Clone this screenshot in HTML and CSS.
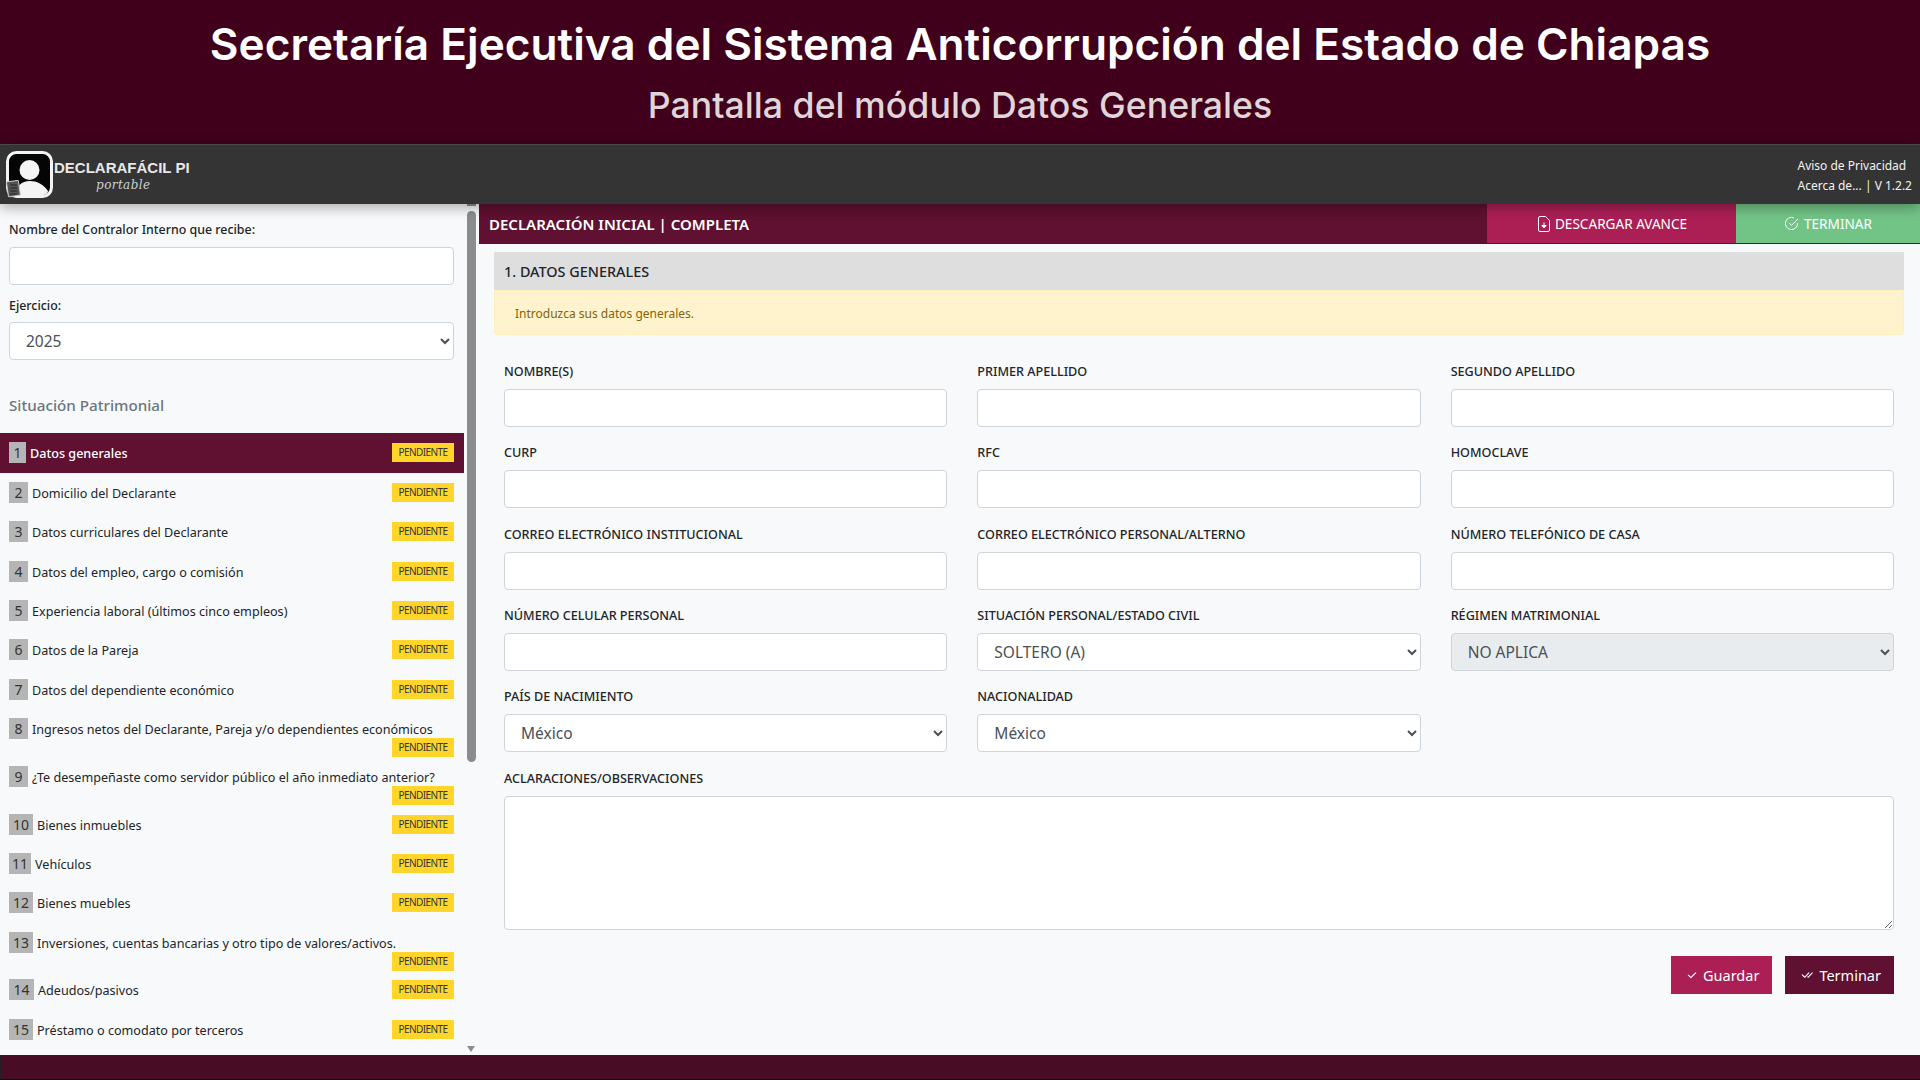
FILE: index.html
```html
<!DOCTYPE html>
<html>

<head>
  <meta name="viewport" content="width=device-width, initial-scale=1">
  <link rel="stylesheet" href="styles.css">
</head>

<body>

  <header class="banner">
    <h1>Secretaría Ejecutiva del Sistema Anticorrupción del Estado de Chiapas</h1>
    <h2>Pantalla del módulo Datos Generales</h2>
  </header>

  <nav class="navbar">
    <div class="brand">
      <svg class="brand-logo" viewBox="0 0 48 48" width="48" height="48">
        <rect x="1.500" y="1.500" width="44" height="44" rx="9" fill="#050505" stroke="#f4f4f4" stroke-width="3"/>
        <circle cx="23.500" cy="19" r="10" fill="#f4f4f4"/>
        <path d="M9 44c1-9 7-14 14.500-14S37 33 42 40c0 2-2 4-5 4z" fill="#f4f4f4"/>
        <rect x="1.500" y="30" width="12" height="15" rx="1" fill="#555" stroke="#ccc" stroke-width="1" transform="rotate(-8 8 38)"/>
        <path d="M4.500 34h6.500M4.500 37h6.500M4.500 40h6.500M4.500 43h6.500" stroke="#222" stroke-width="1"/>
      </svg>
      <div class="brand-text">
        <span class="brand-name">DECLARAFÁCIL PI</span>
        <span class="brand-sub">portable</span>
      </div>
    </div>
    <div class="nav-links">
      <span>Aviso de Privacidad</span>
      <span>Acerca de... | V 1.2.2</span>
    </div>
  </nav>

  <div class="workspace">
    <aside class="sidebar">
      <div class="side-content">
        <div class="side-form">
          <label class="side-label">Nombre del Contralor Interno que recibe:</label>
          <input class="field" type="text">
          <label class="side-label side-label-second">Ejercicio:</label>
          <select class="field">
            <option>2025</option>
          </select>
        </div>
        <h3 class="side-title">Situación Patrimonial</h3>
        <ul class="steps">
          <li class="step active"><span class="num w17">1</span><span class="step-text">Datos generales</span><span class="badge">PENDIENTE</span></li>
          <li class="step"><span class="num">2</span><span class="step-text">Domicilio del Declarante</span><span class="badge">PENDIENTE</span></li>
          <li class="step"><span class="num">3</span><span class="step-text">Datos curriculares del Declarante</span><span class="badge">PENDIENTE</span></li>
          <li class="step"><span class="num">4</span><span class="step-text">Datos del empleo, cargo o comisión</span><span class="badge">PENDIENTE</span></li>
          <li class="step"><span class="num">5</span><span class="step-text">Experiencia laboral (últimos cinco empleos)</span><span class="badge">PENDIENTE</span></li>
          <li class="step"><span class="num">6</span><span class="step-text">Datos de la Pareja</span><span class="badge">PENDIENTE</span></li>
          <li class="step"><span class="num">7</span><span class="step-text">Datos del dependiente económico</span><span class="badge">PENDIENTE</span></li>
          <li class="step wrap"><span class="num">8</span><span class="step-text">Ingresos netos del Declarante, Pareja y/o dependientes económicos</span><span class="badge">PENDIENTE</span></li>
          <li class="step wrap"><span class="num">9</span><span class="step-text">¿Te desempeñaste como servidor público el año inmediato anterior?</span><span class="badge">PENDIENTE</span></li>
          <li class="step"><span class="num w24">10</span><span class="step-text">Bienes inmuebles</span><span class="badge">PENDIENTE</span></li>
          <li class="step"><span class="num w22">11</span><span class="step-text">Vehículos</span><span class="badge">PENDIENTE</span></li>
          <li class="step"><span class="num w24">12</span><span class="step-text">Bienes muebles</span><span class="badge">PENDIENTE</span></li>
          <li class="step wrap"><span class="num w24">13</span><span class="step-text">Inversiones, cuentas bancarias y otro tipo de valores/activos.</span><span class="badge">PENDIENTE</span></li>
          <li class="step"><span class="num w25">14</span><span class="step-text">Adeudos/pasivos</span><span class="badge">PENDIENTE</span></li>
          <li class="step"><span class="num w24">15</span><span class="step-text">Préstamo o comodato por terceros</span><span class="badge">PENDIENTE</span></li>
        </ul>
      </div>
      <div class="scroll">
        <div class="scroll-top"></div>
        <div class="scroll-thumb"></div>
        <div class="scroll-arrow"></div>
      </div>
    </aside>

    <main class="content">
      <div class="titlebar">
        <span class="titlebar-text">DECLARACIÓN INICIAL | COMPLETA</span>
        <button class="top-btn btn-download">
          <svg viewBox="0 0 12 16" width="12" height="16" fill="none" stroke="currentColor" stroke-width="1">
            <path d="M2 .5h5.500L11.500 4.500V14a1.500 1.500 0 0 1-1.500 1.500H2A1.500 1.500 0 0 1 .5 14V2A1.500 1.500 0 0 1 2 .5z"/>
            <path d="M6 6.500v3M3.800 9.500h4.400L6 12z" fill="currentColor"/>
          </svg>
          DESCARGAR AVANCE
        </button>
        <button class="top-btn btn-finish">
          <svg viewBox="0 0 16 16" width="15" height="15" fill="none" stroke="currentColor" stroke-width="1">
            <path d="M14.500 7.500V8A6.500 6.500 0 1 1 10.600 2"/>
            <path d="M5.500 7.500L8 10l7-7"/>
          </svg>
          TERMINAR
        </button>
      </div>

      <div class="panel">
        <div class="panel-head">1. DATOS GENERALES</div>
        <div class="alert">Introduzca sus datos generales.</div>

        <form class="form-grid">
          <div class="group"><label>NOMBRE(S)</label><input class="field" type="text"></div>
          <div class="group"><label>PRIMER APELLIDO</label><input class="field" type="text"></div>
          <div class="group"><label>SEGUNDO APELLIDO</label><input class="field" type="text"></div>
          <div class="group"><label>CURP</label><input class="field" type="text"></div>
          <div class="group"><label>RFC</label><input class="field" type="text"></div>
          <div class="group"><label>HOMOCLAVE</label><input class="field" type="text"></div>
          <div class="group"><label>CORREO ELECTRÓNICO INSTITUCIONAL</label><input class="field" type="text"></div>
          <div class="group"><label>CORREO ELECTRÓNICO PERSONAL/ALTERNO</label><input class="field" type="text"></div>
          <div class="group"><label>NÚMERO TELEFÓNICO DE CASA</label><input class="field" type="text"></div>
          <div class="group"><label>NÚMERO CELULAR PERSONAL</label><input class="field" type="text"></div>
          <div class="group"><label>SITUACIÓN PERSONAL/ESTADO CIVIL</label><select class="field"><option>SOLTERO (A)</option></select></div>
          <div class="group"><label>RÉGIMEN MATRIMONIAL</label><select class="field" disabled><option>NO APLICA</option></select></div>
          <div class="group"><label>PAÍS DE NACIMIENTO</label><select class="field"><option>México</option></select></div>
          <div class="group group-end"><label>NACIONALIDAD</label><select class="field"><option>México</option></select></div>
          <div class="group group-full"><label>ACLARACIONES/OBSERVACIONES</label><textarea class="field notes"></textarea></div>
        </form>

        <div class="actions">
          <button class="btn btn-save">
            <svg viewBox="0 0 16 16" width="12" height="12" fill="currentColor"><path d="M13.500 4.500a.8.8 0 0 1 0 1.100l-6.500 6.500a.8.8 0 0 1-1.100 0L2.500 8.700a.8.8 0 0 1 1.100-1.100L6.400 10.400l6-5.900a.8.8 0 0 1 1.100 0z"/></svg>
            Guardar
          </button>
          <button class="btn btn-end">
            <svg viewBox="0 0 16 16" width="14" height="12" fill="currentColor"><path d="M11 4.500a.7.7 0 0 1 0 1L5.500 11.500a.7.7 0 0 1-1 0L1.200 8.200a.7.7 0 0 1 1-1L5 10l5-5.500a.7.7 0 0 1 1 0z"/><path d="M15.500 4.500a.7.7 0 0 1 0 1L10 11.500a.7.7 0 0 1-1 0l-.8-.8 1-1 .3.300 5-5.500a.7.7 0 0 1 1 0z"/></svg>
            Terminar
          </button>
        </div>
      </div>
    </main>
  </div>

  <footer class="footer"></footer>

</body>

</html>
```

FILE: styles.css
```css
* {
  box-sizing: border-box;
}

html,
body {
  height: 100%;
}

body {
  margin: 0;
  height: 1080px;
  overflow: hidden;
  display: flex;
  flex-direction: column;
  background: #f8f9fa;
  font-family: "Noto Sans", "Open Sans", sans-serif;
  font-size: 12.6px;
  color: #212529;
}

/* Top banner */
.banner {
  height: 144px;
  flex: none;
  background: #40001c;
  color: #fff;
  text-align: center;
  font-family: Inter, "Open Sans", sans-serif;
}

.banner h1 {
  margin: 0;
  padding-top: 18px;
  font-size: 44.2px;
  line-height: 52px;
  font-weight: 600;
}

.banner h2 {
  margin: 0;
  padding-top: 12px;
  font-size: 35.7px;
  line-height: 46px;
  font-weight: 500;
  color: #e0d5d9;
}

/* Navbar */
.navbar {
  height: 60px;
  flex: none;
  display: flex;
  justify-content: space-between;
  align-items: center;
  background: #343434;
  border-top: 1px solid #4a4a4a;
  box-shadow: 0 4px 12px rgba(0, 0, 0, .3);
  position: relative;
  z-index: 2;
  padding: 0 8px 0 6px;
  color: #f2f2f2;
}

.brand {
  display: flex;
  align-items: center;
}

.brand-text {
  display: flex;
  flex-direction: column;
  align-items: center;
  padding-top: 2px;
}

.brand-name {
  font-family: "Liberation Sans", Arial, sans-serif;
  font-weight: 700;
  font-size: 15px;
  line-height: 18px;
  color: #e8e8e8;
}

.brand-sub {
  font-family: "DejaVu Serif", serif;
  font-style: italic;
  font-size: 12px;
  line-height: 16px;
  letter-spacing: .4px;
  margin-left: 3px;
  color: #d0d0d0;
}

.nav-links {
  display: flex;
  flex-direction: column;
  padding-top: 2px;
  font-size: 12px;
  line-height: 20px;
}

/* Main area */
.workspace {
  flex: 1;
  display: flex;
  min-height: 0;
}

.sidebar {
  width: 479px;
  flex: none;
  display: flex;
  overflow: hidden;
}

.side-content {
  width: 464px;
  flex: none;
}

.side-form {
  padding: 16px 10px 0 9px;
}

.side-label {
  display: block;
  font-size: 12.4px;
  font-weight: 500;
  line-height: 19px;
  margin-bottom: 8px;
}

.side-label-second {
  margin-top: 11px;
  margin-bottom: 7px;
}

.field {
  display: block;
  width: 100%;
  height: 38px;
  padding: 6px 16px;
  background: #fff;
  border: 1px solid #ced4da;
  border-radius: 4px;
  font-family: inherit;
  font-size: 15.5px;
  color: #495057;
  outline: none;
}

select.field {
  padding-left: 12px;
}

select.field:disabled {
  background: #e9ecef;
  opacity: 1;
}

.side-title {
  margin: 34px 0 0 9px;
  font-size: 15.2px;
  line-height: 22px;
  font-weight: 500;
  color: #6c757d;
}

.steps {
  list-style: none;
  margin: 17px 0 0;
  padding: 0;
}

.step {
  display: flex;
  flex-wrap: wrap;
  align-items: flex-start;
  height: 39.33px;
  padding: 9px 10px 0 9px;
}

.step.active {
  height: 40px;
  background: #601030;
  color: #fff;
  font-weight: 500;
}

.step.wrap {
  height: 47.8px;
}

.num {
  width: 19px;
  height: 21px;
  background: #b5b5b5;
  text-align: center;
  font-size: 14px;
  line-height: 22px;
  font-weight: 400;
  color: #333;
  margin-right: 4px;
}

.w17 {
  width: 17px;
}

.w22 {
  width: 22px;
}

.w24 {
  width: 24px;
}

.w25 {
  width: 25px;
}

.step-text {
  height: 21px;
  line-height: 24px;
}

.step.wrap .num {
  margin-bottom: -1px;
}

.step.wrap .step-text {
  width: calc(100% - 30px);
  height: 20px;
  white-space: nowrap;
}

.badge {
  width: 62px;
  height: 19px;
  margin: 1px 0 0 auto;
  background: #ffd52c;
  color: #343434;
  text-align: center;
  font-size: 10px;
  letter-spacing: -.6px;
  line-height: 19px;
  font-weight: 400;
}

.step.wrap .badge {
  margin-top: 0;
}

/* Drawn scrollbar */
.scroll {
  flex: 1;
  display: flex;
  flex-direction: column;
  padding: 0 3px 3px;
}

.scroll-top {
  height: 2px;
  margin-bottom: 5px;
  background: #8c8c8c;
}

.scroll-thumb {
  height: 551px;
  background: #8c8c8c;
  border-radius: 5px;
}

.scroll-arrow {
  margin-top: auto;
  width: 0;
  height: 0;
  border-left: 4.5px solid transparent;
  border-right: 4.5px solid transparent;
  border-top: 6px solid #8c8c8c;
}

.content {
  flex: 1;
  min-width: 0;
}

.titlebar {
  display: flex;
  height: 40px;
  background: #601030;
  color: #fff;
}

.titlebar-text {
  flex: 1;
  padding-left: 10px;
  line-height: 40px;
  font-size: 15px;
  font-weight: 600;
}

.top-btn {
  height: 39px;
  border: 0;
  color: #fff;
  font-family: inherit;
  font-size: 13.6px;
  display: flex;
  align-items: center;
  justify-content: center;
  gap: 5px;
}

.btn-download {
  width: 249px;
  padding-left: 8px;
  background: #ab1f55;
}

.btn-finish {
  width: 184px;
  background: #72c486;
}

.panel {
  padding: 8px 16px 0 15px;
}

.panel-head {
  height: 38px;
  padding-left: 10px;
  line-height: 39px;
  font-size: 14.4px;
  font-weight: 500;
  background: #dedede;
}

.alert {
  height: 45px;
  padding-left: 20px;
  line-height: 46px;
  background: #fff3cd;
  border: 1px solid #ffeeba;
  border-radius: 0 0 4px 4px;
  color: #856404;
  font-size: 12px;
}

.form-grid {
  display: grid;
  grid-template-columns: repeat(3, 1fr);
  column-gap: 30px;
  padding: 26px 10px 0;
}

.group {
  height: 81.33px;
}

.group label {
  display: block;
  height: 28px;
  font-size: 12.6px;
  line-height: 22px;
  font-weight: 500;
}

.group-end {
  grid-column: span 2;
}

.group-end .field {
  width: calc(50% - 15px);
}

.group-full {
  grid-column: 1 / -1;
  height: auto;
}

.notes {
  height: 134px;
  resize: vertical;
}

.actions {
  display: flex;
  justify-content: flex-end;
  gap: 13px;
  padding: 26px 10px 0 0;
}

.btn {
  height: 38px;
  border: 0;
  color: #fff;
  font-family: inherit;
  font-size: 14.500px;
  display: flex;
  align-items: center;
  gap: 5px;
  padding: 0 13px 0 15px;
}

.btn-save {
  background: #ab1f55;
}

.btn-end {
  background: #601030;
}

.footer {
  height: 25px;
  flex: none;
  background: #480c25;
  border-left: 1px solid #222;
  border-bottom: 1px solid #111;
}
```
